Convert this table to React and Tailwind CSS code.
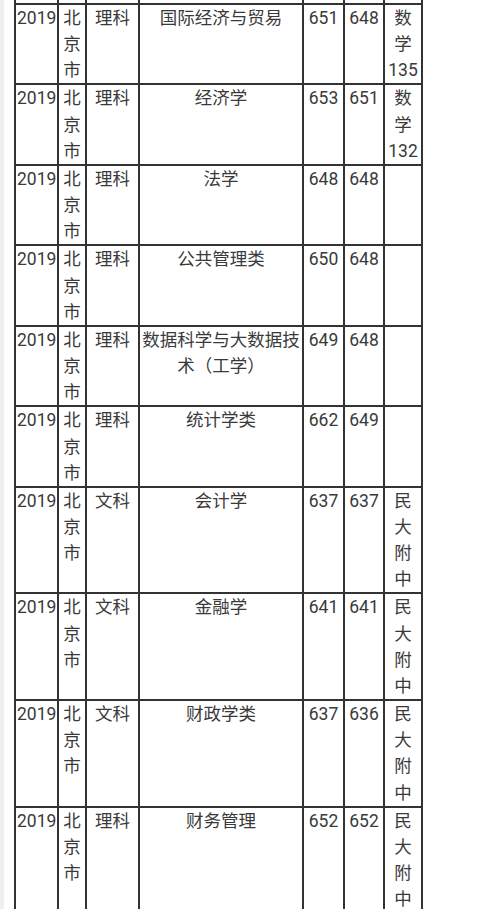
import React from 'react';

const rows = [
    { year: '2019', city: '北京市', type: '理科', major: '国际经济与贸易', max: '651', min: '648', note: '数学135' },
    { year: '2019', city: '北京市', type: '理科', major: '经济学', max: '653', min: '651', note: '数学132' },
    { year: '2019', city: '北京市', type: '理科', major: '法学', max: '648', min: '648', note: '' },
    { year: '2019', city: '北京市', type: '理科', major: '公共管理类', max: '650', min: '648', note: '' },
    { year: '2019', city: '北京市', type: '理科', major: '数据科学与大数据技术（工学）', max: '649', min: '648', note: '' },
    { year: '2019', city: '北京市', type: '理科', major: '统计学类', max: '662', min: '649', note: '' },
    { year: '2019', city: '北京市', type: '文科', major: '会计学', max: '637', min: '637', note: '民大附中' },
    { year: '2019', city: '北京市', type: '文科', major: '金融学', max: '641', min: '641', note: '民大附中' },
    { year: '2019', city: '北京市', type: '文科', major: '财政学类', max: '637', min: '636', note: '民大附中' },
    { year: '2019', city: '北京市', type: '理科', major: '财务管理', max: '652', min: '652', note: '民大附中' },
];

const cell = 'border-2 border-[#333] align-top p-0';

export default function App() {
    return (
        <div className="min-h-screen bg-white border-l-4 border-[#efefef] pl-[10px] overflow-hidden" style={{ fontFamily: 'Roboto, "Noto Sans CJK SC", sans-serif' }}>
            <table className="table-fixed border-collapse w-[407px] text-[17.5px] leading-[26.15px] text-[#3a3a3a]">
                <colgroup>
                    <col className="w-[43px]" />
                    <col className="w-[28px]" />
                    <col className="w-[53px]" />
                    <col className="w-[164px]" />
                    <col className="w-[41px]" />
                    <col className="w-[40px]" />
                    <col className="w-[38px]" />
                </colgroup>
                <tbody>
                    <tr className="h-[4px]">
                        {[0, 1, 2, 3, 4, 5, 6].map(i => <td key={i} className="border-x-2 border-[#333] p-0"></td>)}
                    </tr>
                    {rows.map((r, i) => (
                        <tr key={i}>
                            <td className={`${cell} text-left pl-px`}>{r.year}</td>
                            <td className={`${cell} text-center`}>{r.city}</td>
                            <td className={`${cell} text-center`}>{r.type}</td>
                            <td className={`${cell} text-center`}>{r.major}</td>
                            <td className={`${cell} text-center`}>{r.max}</td>
                            <td className={`${cell} text-center`}>{r.min}</td>
                            <td className={`${cell} text-center px-[3px]`}>{r.note}</td>
                        </tr>
                    ))}
                </tbody>
            </table>
        </div>
    );
}
